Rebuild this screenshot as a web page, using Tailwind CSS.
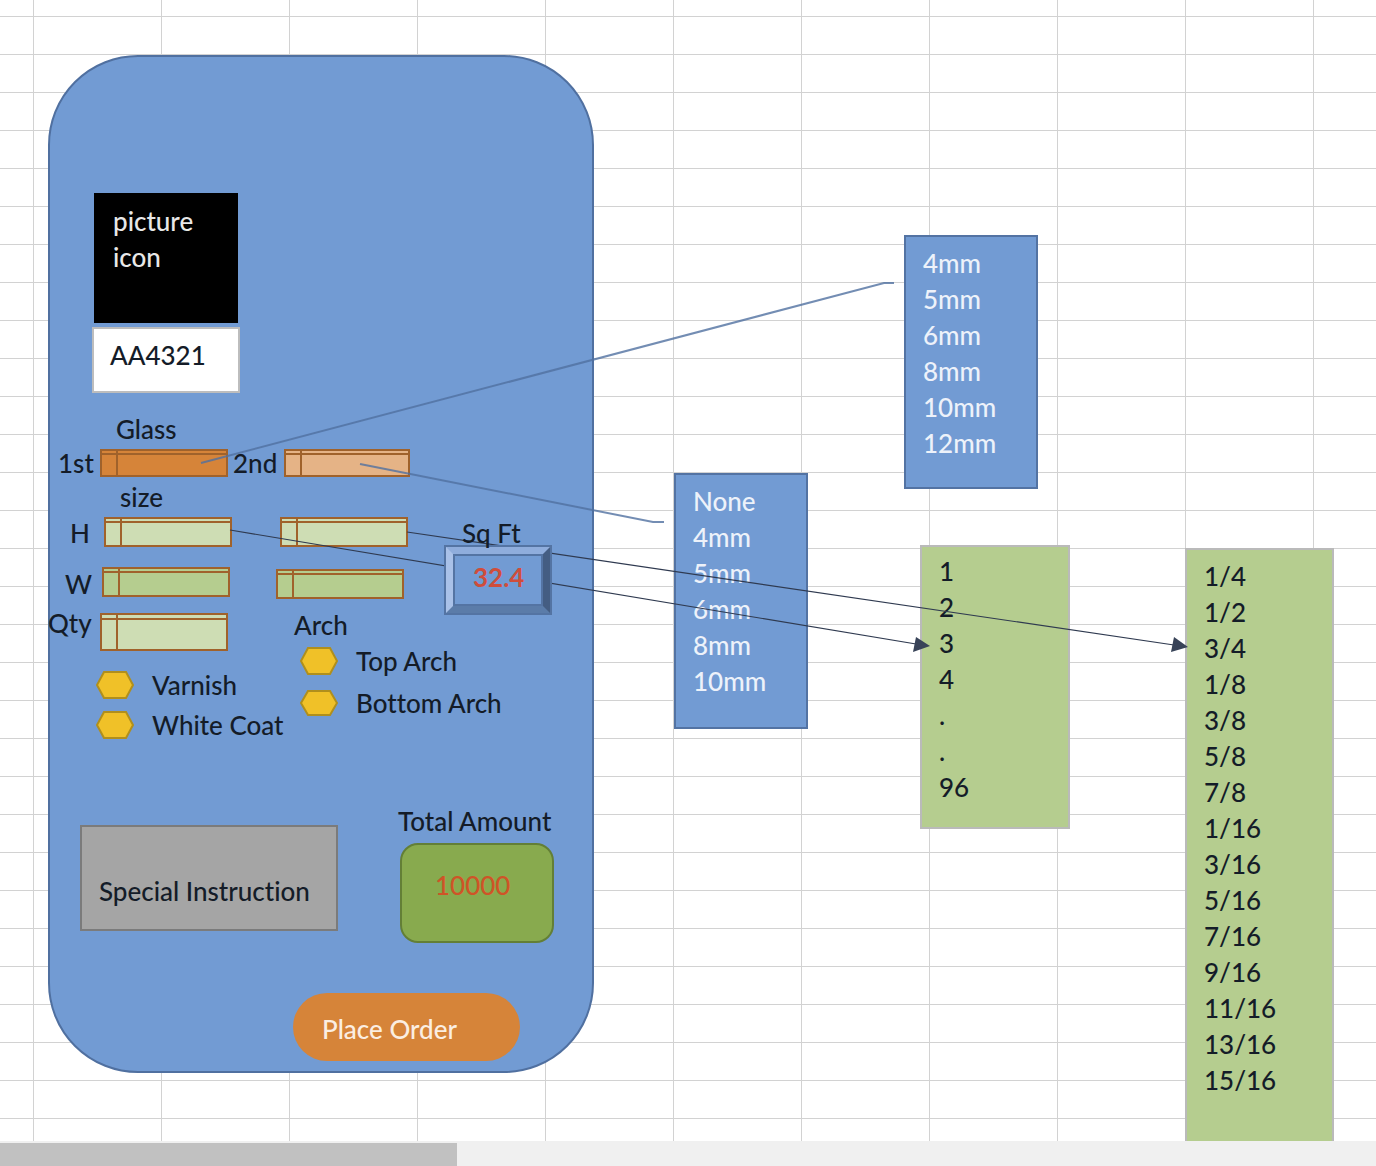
<!DOCTYPE html>
<html lang="en">
<head>
<meta charset="utf-8">
<title>Glass order form</title>
<script src="https://cdn.jsdelivr.net/npm/@tailwindcss/browser@4"></script>
</head>
<body class="flex h-screen flex-col overflow-hidden bg-white font-[Lato,sans-serif] text-[26px] font-medium leading-9 text-[#141c28] [font-variant-ligatures:none]">
<main class="relative min-h-0 flex-1 overflow-hidden bg-[linear-gradient(to_right,#d2d2d2_1px,transparent_1px),linear-gradient(to_bottom,#d2d2d2_1px,transparent_1px)] bg-[length:128px_38px] bg-[position:33px_16px]">

  <!-- Phone mock-up -->
  <form class="absolute left-12 top-[55px] flex h-[1018px] w-[546px] flex-col rounded-[90px] border-2 border-[#5070a0] bg-[#729bd3]">
    <div class="ml-11 mt-[136px] h-[130px] w-36 bg-black px-[19px] py-2.5 text-[#e8e8e8]">picture icon</div>
    <div class="ml-[42px] mt-1 h-[66px] w-[148px] border-2 border-[#bdbdbd] bg-white px-4 py-2">AA4321</div>

    <h2 class="ml-[66px] mt-[18px] h-[38px]">Glass</h2>
    <div class="flex h-7 items-center whitespace-nowrap">
      <label for="g1" class="w-[50px] pl-2">1st</label>
      <select id="g1" class="h-7 w-32 appearance-none border-2 border-[#a0622b] bg-[#d68439] bg-[linear-gradient(#a0622b,#a0622b),linear-gradient(#a0622b,#a0622b)] bg-[length:2px_100%,100%_2px] bg-[position:14px_0,0_2px] bg-no-repeat"><option></option><option>4mm</option><option>5mm</option></select>
      <label for="g2" class="w-14 pl-[5px]">2nd</label>
      <select id="g2" class="h-7 w-[126px] appearance-none border-2 border-[#a0622b] bg-[#e5b386] bg-[linear-gradient(#a0622b,#a0622b),linear-gradient(#a0622b,#a0622b)] bg-[length:2px_100%,100%_2px] bg-[position:14px_0,0_2px] bg-no-repeat"><option></option><option>None</option><option>4mm</option></select>
    </div>
    <h2 class="ml-[70px] mt-0.5 h-[38px]">size</h2>

    <div class="flex whitespace-nowrap">
      <div class="flex w-[226px] flex-col">
        <div class="flex h-[30px] items-center">
          <label for="h1" class="w-[54px] pl-5 pt-0.5">H</label>
          <select id="h1" class="h-[30px] w-32 appearance-none border-2 border-[#a0622b] bg-[#ceddb4] bg-[linear-gradient(#a0622b,#a0622b),linear-gradient(#a0622b,#a0622b)] bg-[length:2px_100%,100%_2px] bg-[position:14px_0,0_2px] bg-no-repeat"><option></option><option>1</option></select>
        </div>
        <div class="mt-5 flex h-[30px] items-center">
          <label for="w1" class="w-[52px] pl-[15px] pt-1">W</label>
          <select id="w1" class="h-[30px] w-32 appearance-none border-2 border-[#a0622b] bg-[#b5cd8f] bg-[linear-gradient(#a0622b,#a0622b),linear-gradient(#a0622b,#a0622b)] bg-[length:2px_100%,100%_2px] bg-[position:14px_0,0_2px] bg-no-repeat"><option></option><option>1</option></select>
        </div>
        <div class="mt-4 flex h-[38px]">
          <label for="qty" class="-ml-0.5 -mt-2 w-[52px]">Qty</label>
          <input id="qty" type="text" class="h-[38px] w-32 border-2 border-[#a0622b] bg-[#ceddb4] bg-[linear-gradient(#a0622b,#a0622b),linear-gradient(#a0622b,#a0622b)] bg-[length:2px_100%,100%_2px] bg-[position:14px_0,0_3px] bg-no-repeat pl-5">
        </div>
        <label class="mt-5 flex h-7 items-center gap-[18px] pl-[46px]"><input type="checkbox" class="sr-only"><svg class="h-7 w-[38px] shrink-0" viewBox="0 0 38 28"><path d="M8 1H30L37 14L30 27H8L1 14Z" fill="#f0c128" stroke="#b08f1c" stroke-width="2"/></svg>Varnish</label>
        <label class="mt-3 flex h-7 items-center gap-[18px] pl-[46px]"><input type="checkbox" class="sr-only"><svg class="h-7 w-[38px] shrink-0" viewBox="0 0 38 28"><path d="M8 1H30L37 14L30 27H8L1 14Z" fill="#f0c128" stroke="#b08f1c" stroke-width="2"/></svg>White Coat</label>
      </div>
      <div class="flex w-[168px] flex-col">
        <select aria-label="Height fraction" class="ml-1 h-[30px] w-32 appearance-none border-2 border-[#a0622b] bg-[#ceddb4] bg-[linear-gradient(#a0622b,#a0622b),linear-gradient(#a0622b,#a0622b)] bg-[length:2px_100%,100%_2px] bg-[position:14px_0,0_2px] bg-no-repeat"><option></option><option>1/4</option></select>
        <select aria-label="Width fraction" class="mt-[22px] h-[30px] w-32 appearance-none border-2 border-[#a0622b] bg-[#b5cd8f] bg-[linear-gradient(#a0622b,#a0622b),linear-gradient(#a0622b,#a0622b)] bg-[length:2px_100%,100%_2px] bg-[position:14px_0,0_2px] bg-no-repeat"><option></option><option>1/4</option></select>
        <h2 class="ml-[18px] mt-2 h-9">Arch</h2>
        <label class="mt-1 flex h-7 items-center gap-[18px] pl-6"><input type="checkbox" class="sr-only"><svg class="h-7 w-[38px] shrink-0" viewBox="0 0 38 28"><path d="M8 1H30L37 14L30 27H8L1 14Z" fill="#f0c128" stroke="#b08f1c" stroke-width="2"/></svg>Top Arch</label>
        <label class="mt-3.5 flex h-7 items-center gap-[18px] pl-6"><input type="checkbox" class="sr-only"><svg class="h-[26px] w-[38px] shrink-0" viewBox="0 0 38 26"><path d="M8 1H30L37 13L30 25H8L1 13Z" fill="#f0c128" stroke="#b08f1c" stroke-width="2"/></svg>Bottom Arch</label>
      </div>
      <div class="w-[108px]">
        <h2 class="relative z-30 -mt-0.5 h-[30px] pl-[18px]">Sq Ft</h2>
        <div class="relative z-20 h-[70px] border-2 border-[#5474a3]">
          <div class="h-full border-[7px] border-b-[#5b7ca9] border-l-[#a9c1e8] border-r-[#445d82] border-t-[#8faddc]">
            <output class="block h-full border-2 border-[#5474a3] bg-[#729bd3] pl-[18px] pt-[3px] font-bold text-[#cf4d3b]">32.4</output>
          </div>
        </div>
      </div>
    </div>

    <div class="mt-[65px] flex items-end pl-[30px]">
      <textarea aria-label="Special Instruction" class="mb-3 h-[106px] w-[258px] resize-none overflow-hidden border-2 border-[#7b7b7b] bg-[#a5a5a5] px-[17px] pt-[46px]">Special Instruction</textarea>
      <div class="ml-[62px] whitespace-nowrap">
        <h2 class="-ml-0.5 -mt-px h-10">Total Amount</h2>
        <output class="block h-[100px] w-[154px] rounded-[18px] border-2 border-[#637f36] bg-[#88aa4e] pl-[33px] pt-[22px] text-[#cf5427]">10000</output>
      </div>
    </div>
    <button type="button" class="ml-[243px] mt-[50px] h-[68px] w-[227px] rounded-full bg-[#d68439] pl-[29px] pt-1 text-left font-medium text-[#fbeee2]">Place Order</button>
  </form>

  <!-- Option lists -->
  <ul class="absolute left-[904px] top-[235px] h-[254px] w-[134px] border-2 border-[#5373a3] bg-[#729bd3] px-[17px] pt-2 text-[#edf2fa]">
    <li>4mm</li><li>5mm</li><li>6mm</li><li>8mm</li><li>10mm</li><li>12mm</li>
  </ul>
  <ul class="absolute left-[674px] top-[473px] h-[256px] w-[134px] border-2 border-[#5373a3] bg-[#729bd3] px-[17px] pt-2 text-[#edf2fa]">
    <li>None</li><li>4mm</li><li>5mm</li><li>6mm</li><li>8mm</li><li>10mm</li>
  </ul>
  <ul class="absolute left-[920px] top-[545px] h-[284px] w-[150px] border-2 border-[#bababa] bg-[#b5cd8f] px-[17px] pt-1.5">
    <li>1</li><li>2</li><li>3</li><li>4</li><li>.</li><li>.</li><li>96</li>
  </ul>
  <ul class="absolute left-[1185px] top-[548px] h-[640px] w-[149px] border-2 border-[#bababa] bg-[#b5cd8f] px-[17px] pt-2">
    <li>1/4</li><li>1/2</li><li>3/4</li><li>1/8</li><li>3/8</li><li>5/8</li><li>7/8</li><li>1/16</li><li>3/16</li><li>5/16</li><li>7/16</li><li>9/16</li><li>11/16</li><li>13/16</li><li>15/16</li>
  </ul>

  <!-- Connectors -->
  <svg class="pointer-events-none absolute left-0 top-0 z-10 h-[1140px] w-[1376px]" viewBox="0 0 1376 1140" fill="none">
    <g stroke="#5070a0" stroke-opacity=".8" stroke-width="2">
      <path d="M201 463L884 283H894"/>
      <path d="M360 464L653 522H664"/>
    </g>
    <g stroke="#2f3a50" stroke-width="1.2">
      <path d="M230 530L916 644"/>
      <path d="M407 532L1174 645"/>
    </g>
    <g fill="#384358">
      <path d="M916 637L930 646L913 652Z"/>
      <path d="M1174 637L1188 647L1171 652Z"/>
    </g>
  </svg>
</main>

<!-- Horizontal scroll bar -->
<footer class="h-[25px] shrink-0 bg-[#f0f0f0] pt-0.5">
  <div class="h-full w-[33.2%] bg-[#c1c1c1]"></div>
</footer>
</body>
</html>
